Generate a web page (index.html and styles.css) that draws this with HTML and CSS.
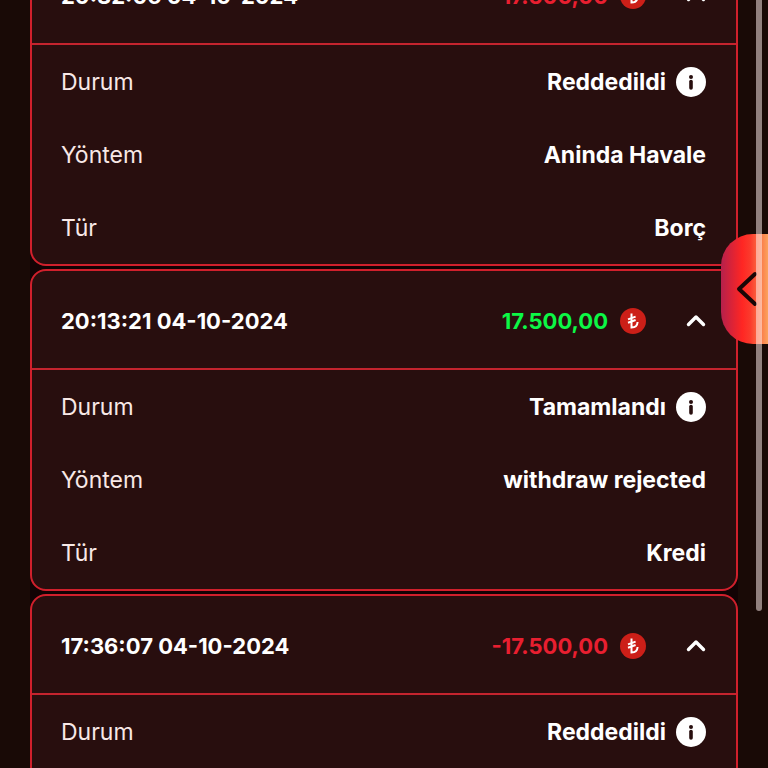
FILE: index.html
```
<!DOCTYPE html>
<html lang="tr">
<head>
    <meta charset="utf-8">
    <meta name="viewport" content="width=device-width, initial-scale=1">
    <title>İşlem Geçmişi</title>
    <link rel="stylesheet" href="styles.css">
</head>
<body>
    <svg class="sprite" aria-hidden="true">
        <symbol id="icon-lira" viewBox="0 0 26 26">
            <circle cx="13" cy="13" r="13" fill="#cc1f18"/>
            <path d="M11.5 5.5V19.5C15 19.5 17.4 17.5 17.6 14M8 11.4L15.6 8.6M8 14.8L15.6 12" fill="none" stroke="#fff" stroke-width="2"/>
        </symbol>
        <symbol id="icon-up" viewBox="0 0 20 14">
            <path d="M2.5 10.5L10 3L17.5 10.5" fill="none" stroke="#fff" stroke-width="3.4" stroke-linecap="round" stroke-linejoin="round"/>
        </symbol>
        <symbol id="icon-info" viewBox="0 0 30 30">
            <circle cx="15" cy="15" r="15" fill="#fff"/>
            <circle cx="15" cy="10" r="2" fill="#280e0e"/>
            <path d="M15 14.5V21" stroke="#280e0e" stroke-width="3.6" stroke-linecap="round"/>
        </symbol>
    </svg>

    <main class="history">
        <section class="card">
            <header class="card-header">
                <span class="date">20:32:06 04-10-2024</span>
                <span class="amount minus">-17.500,00</span>
                <svg class="coin"><use href="#icon-lira"/></svg>
                <button class="toggle" type="button" aria-label="Kapat"><svg><use href="#icon-up"/></svg></button>
            </header>
            <dl class="details">
                <div class="row">
                    <dt>Durum</dt>
                    <dd>Reddedildi <button class="info" type="button" aria-label="Bilgi"><svg><use href="#icon-info"/></svg></button></dd>
                </div>
                <div class="row">
                    <dt>Yöntem</dt>
                    <dd>Aninda Havale</dd>
                </div>
                <div class="row">
                    <dt>Tür</dt>
                    <dd>Borç</dd>
                </div>
            </dl>
        </section>

        <section class="card">
            <header class="card-header">
                <span class="date">20:13:21 04-10-2024</span>
                <span class="amount plus">17.500,00</span>
                <svg class="coin"><use href="#icon-lira"/></svg>
                <button class="toggle" type="button" aria-label="Kapat"><svg><use href="#icon-up"/></svg></button>
            </header>
            <dl class="details">
                <div class="row">
                    <dt>Durum</dt>
                    <dd>Tamamlandı <button class="info" type="button" aria-label="Bilgi"><svg><use href="#icon-info"/></svg></button></dd>
                </div>
                <div class="row">
                    <dt>Yöntem</dt>
                    <dd>withdraw rejected</dd>
                </div>
                <div class="row">
                    <dt>Tür</dt>
                    <dd>Kredi</dd>
                </div>
            </dl>
        </section>

        <section class="card card-last">
            <header class="card-header">
                <span class="date">17:36:07 04-10-2024</span>
                <span class="amount minus">-17.500,00</span>
                <svg class="coin"><use href="#icon-lira"/></svg>
                <button class="toggle" type="button" aria-label="Kapat"><svg><use href="#icon-up"/></svg></button>
            </header>
            <dl class="details">
                <div class="row">
                    <dt>Durum</dt>
                    <dd>Reddedildi <button class="info" type="button" aria-label="Bilgi"><svg><use href="#icon-info"/></svg></button></dd>
                </div>
            </dl>
        </section>
    </main>

    <button class="side-tab" type="button" aria-label="Menüyü aç">
        <svg viewBox="0 0 24 38"><path d="M20 4L4 19L20 34" fill="none" stroke="#1a0606" stroke-width="4" stroke-linecap="round" stroke-linejoin="round"/></svg>
    </button>
    <div class="scroll-thumb"></div>
</body>
</html>
```
FILE: styles.css
```
* {
    box-sizing: border-box;
}
body {
    margin: 0;
    height: 100vh;
    overflow: hidden;
    position: relative;
    background: #190a06;
    color: #fff;
    font-family: Inter, "Liberation Sans", sans-serif;
    font-size: 23px;
    line-height: 30px;
}
button {
    padding: 0;
    border: 0;
    background: none;
    cursor: pointer;
}
svg {
    display: block;
}
.sprite {
    position: absolute;
    width: 0;
    height: 0;
}

/* list is scrolled part way into the first card */
.history {
    display: flex;
    flex-direction: column;
    gap: 3px;
    margin: -56px 30px 0;
    background: #120304;
}
.card {
    border: 2px solid #d0202c;
    border-radius: 16px;
    background: #280e0e;
}
/* runs on below the fold */
.card-last {
    padding-bottom: 146px;
}
.card-header {
    display: flex;
    align-items: center;
    height: 99px;
    padding: 2px 30px 0 29px;
    border-bottom: 2px solid #c4242e;
    font-weight: 700;
    font-size: 22px;
}
.date {
    flex: 1;
}
.plus {
    color: #0cf846;
}
.minus {
    color: #e81f30;
}
.coin {
    width: 26px;
    height: 26px;
    margin: 0 40px 0 12px;
}
.toggle svg {
    width: 20px;
    height: 14px;
}

.details {
    margin: 0;
}
.row {
    display: flex;
    align-items: center;
    justify-content: space-between;
    height: 73px;
    padding: 0 30px 0 29px;
}
.row dt {
    color: #f8e8e6;
}
.row dd {
    display: flex;
    align-items: center;
    gap: 10px;
    margin: 0;
    font-weight: 700;
}
.info svg {
    width: 30px;
    height: 30px;
}

.side-tab {
    position: absolute;
    top: 234px;
    right: 0;
    display: flex;
    align-items: center;
    width: 47px;
    height: 110px;
    padding-left: 14px;
    border-radius: 32px 0 0 32px;
    background: linear-gradient(90deg, #b5204c 0%, #ff2623 45%, #fb3a2c 62%, #fba35e 100%);
}
.side-tab svg {
    width: 24px;
    height: 38px;
}
.scroll-thumb {
    position: absolute;
    top: -8px;
    right: 6px;
    width: 6px;
    height: 619px;
    border-radius: 3px;
    background: rgba(255, 240, 238, 0.52);
}
```
